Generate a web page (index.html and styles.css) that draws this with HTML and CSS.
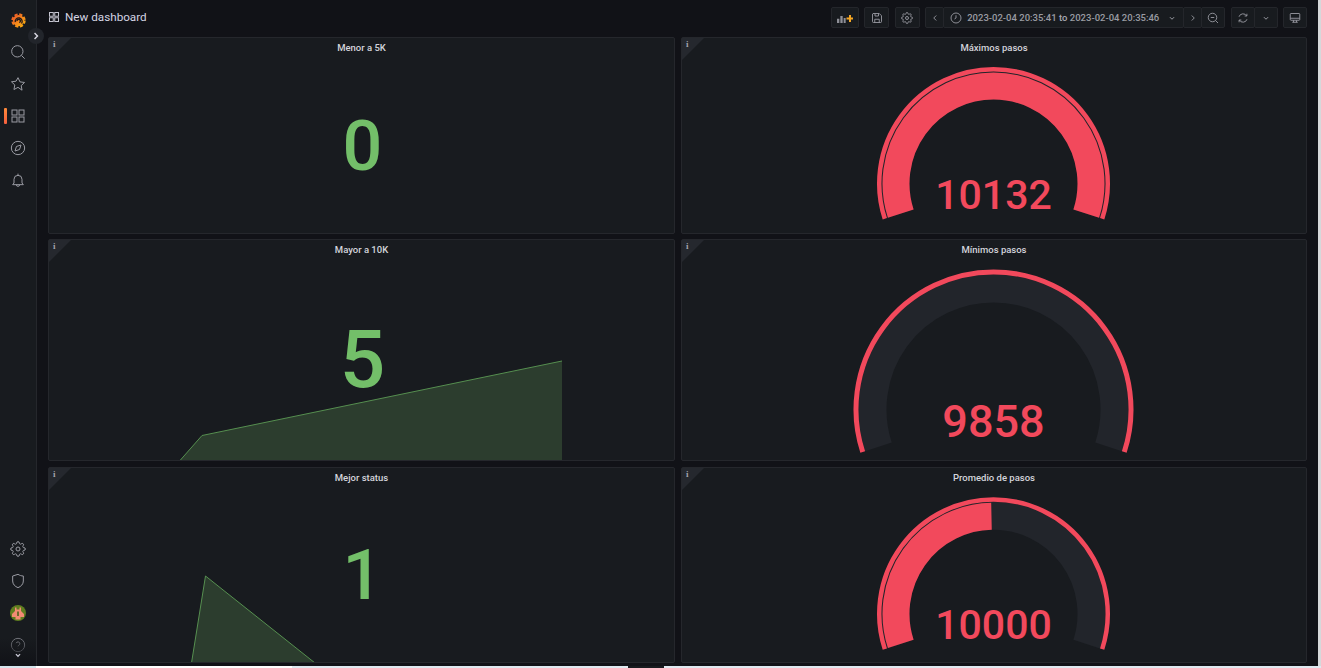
FILE: index.html
```html
<!DOCTYPE html>
<html lang="es">
<head>
  <meta charset="UTF-8" />
  <meta name="viewport" content="width=device-width, initial-scale=1.0" />
  <title>New dashboard</title>
  <link rel="stylesheet" href="styles.css">
</head>
<body>
  <svg class="defs" width="0" height="0">
    <defs>
      <linearGradient id="logo-grad" x1="0" y1="0" x2="1" y2="1">
        <stop offset="0" stop-color="#f0562a" />
        <stop offset="1" stop-color="#fbb30f" />
      </linearGradient>
      <symbol id="i-gear" viewBox="0 0 24 24">
        <circle cx="12" cy="12" r="3" />
        <path d="M19.4 15a1.65 1.65 0 0 0 .33 1.82l.06.06a2 2 0 0 1 0 2.83 2 2 0 0 1-2.83 0l-.06-.06a1.65 1.65 0 0 0-1.82-.33 1.65 1.65 0 0 0-1 1.51V21a2 2 0 0 1-2 2 2 2 0 0 1-2-2v-.09A1.65 1.65 0 0 0 9 19.4a1.65 1.65 0 0 0-1.82.33l-.06.06a2 2 0 0 1-2.83 0 2 2 0 0 1 0-2.83l.06-.06a1.65 1.65 0 0 0 .33-1.82 1.65 1.65 0 0 0-1.51-1H3a2 2 0 0 1-2-2 2 2 0 0 1 2-2h.09A1.65 1.65 0 0 0 4.6 9a1.65 1.65 0 0 0-.33-1.82l-.06-.06a2 2 0 0 1 0-2.83 2 2 0 0 1 2.83 0l.06.06a1.65 1.65 0 0 0 1.82.33H9a1.65 1.65 0 0 0 1-1.51V3a2 2 0 0 1 2-2 2 2 0 0 1 2 2v.09a1.65 1.65 0 0 0 1 1.51 1.65 1.65 0 0 0 1.82-.33l.06-.06a2 2 0 0 1 2.83 0 2 2 0 0 1 0 2.83l-.06.06a1.65 1.65 0 0 0-.33 1.82V9a1.65 1.65 0 0 0 1.51 1H21a2 2 0 0 1 2 2 2 2 0 0 1-2 2h-.09a1.65 1.65 0 0 0-1.51 1z" />
      </symbol>
      <symbol id="i-grid" viewBox="0 0 24 24">
        <rect x="3" y="3" width="7.5" height="7.5" />
        <rect x="13.5" y="3" width="7.5" height="7.5" />
        <rect x="3" y="13.5" width="7.5" height="7.5" />
        <rect x="13.5" y="13.5" width="7.5" height="7.5" />
      </symbol>
      <symbol id="i-chev-down" viewBox="0 0 24 24"><path d="M7 10l5 5 5-5" /></symbol>
      <symbol id="i-chev-left" viewBox="0 0 24 24"><path d="M14.5 7l-5 5 5 5" /></symbol>
      <symbol id="i-chev-right" viewBox="0 0 24 24"><path d="M9.5 7l5 5-5 5" /></symbol>
    </defs>
  </svg>

  <div class="app">
    <nav class="sidebar">
      <div class="side-group">
        <a class="side-item">
          <svg class="logo" viewBox="0 0 24 24">
            <circle class="logo-teeth" cx="12" cy="12" r="9.8" />
            <circle class="logo-body" cx="12" cy="12" r="9" />
            <path class="logo-spiral" d="M6.8 14.5a5.6 5.6 0 1 1 10 2.300" />
            <path class="logo-spiral" d="M9.500 13a2.800 2.800 0 1 1 3.800 2.400" />
          </svg>
        </a>
        <a class="side-item"><svg class="icon-lg" viewBox="0 0 24 24"><circle cx="11" cy="11" r="8.5" /><path d="M17.2 17.2L22 22" /></svg></a>
        <a class="side-item"><svg class="icon-lg" viewBox="0 0 24 24"><path d="M12 2.5l2.95 6.3 6.85.9-5 4.75 1.27 6.85L12 17l-6.07 3.3 1.27-6.85-5-4.75 6.85-.9z" /></svg></a>
        <a class="side-item is-active"><svg class="icon-lg" viewBox="0 0 24 24"><use href="#i-grid" /></svg></a>
        <a class="side-item"><svg class="icon-lg" viewBox="0 0 24 24"><circle cx="12" cy="12" r="10" /><path d="M16.5 7.5l-2.2 6.8-6.8 2.2 2.2-6.8z" /></svg></a>
        <a class="side-item"><svg class="icon-lg" viewBox="0 0 24 24"><path d="M18 16.5V11a6 6 0 0 0-12 0v5.5L4 19h16zM12 2.5V5M9.5 19a2.5 2.5 0 0 0 5 0" /></svg></a>
      </div>
      <div class="side-group">
        <a class="side-item"><svg class="icon-lg" viewBox="0 0 24 24"><use href="#i-gear" /></svg></a>
        <a class="side-item"><svg class="icon-lg" viewBox="0 0 24 24"><path d="M12 2L4 4.5V12c0 4.8 3.4 8.2 8 10 4.6-1.8 8-5.2 8-10V4.5C17 4.5 14.500 3.500 12 2z" /></svg></a>
        <a class="side-item">
          <svg class="avatar" viewBox="0 0 16 16">
            <circle class="avatar-bg" cx="8" cy="8" r="8" />
            <path class="avatar-fg" d="M5 2.500h1.500v2h3v-2H11v3.500l3 3v3H10.500v2.500h-5V12H2v-3l3-3z" />
            <path class="avatar-dk" d="M7 6.500h2v4.500H7z" />
          </svg>
        </a>
        <a class="side-item dim"><svg class="icon-lg" viewBox="0 0 24 24"><circle cx="12" cy="12" r="10" /><path d="M9.2 9.200a2.900 2.900 0 0 1 5.600 1c0 1.900-2.800 2.400-2.800 3.800M12 17.200v.3" /></svg></a>
      </div>
      <svg class="side-more" viewBox="0 0 24 24"><use href="#i-chev-down" /></svg>
    </nav>
    <button class="side-toggle"><svg viewBox="0 0 24 24"><use href="#i-chev-right" /></svg></button>

    <main class="content">
      <header class="toolbar">
        <div class="crumb">
          <svg class="crumb-icon" viewBox="0 0 24 24"><use href="#i-grid" /></svg>
          <span>New dashboard</span>
        </div>
        <div class="actions">
          <button class="tb-btn w-add">
            <svg class="icon-add" viewBox="0 0 24 24">
              <path class="bars" d="M0 13h3.500v6.500H0zM5 9h3.500v10.500H5zM10 12h3v7.500h-3z" />
              <path class="plus" d="M19.500 7.500V18M14.250 12.750h10.500" />
            </svg>
          </button>
          <button class="tb-btn w-icon"><svg class="icon" viewBox="0 0 24 24"><path d="M4 3h12.500L21 7.500V19a2 2 0 0 1-2 2H5a2 2 0 0 1-2-2V4zM8 3v5h7V3M7.500 21v-6.500h9V21" /></svg></button>
          <button class="tb-btn w-icon"><svg class="icon" viewBox="0 0 24 24"><use href="#i-gear" /></svg></button>

          <div class="tb-group">
            <button class="tb-btn w-arrow"><svg class="icon" viewBox="0 0 24 24"><use href="#i-chev-left" /></svg></button>
            <button class="tb-btn w-time">
              <svg class="icon" viewBox="0 0 24 24"><circle cx="12" cy="12" r="10" /><path d="M12 6.500V12l-3 2" /></svg>
              <span class="time-text">2023-02-04 20:35:41 <b>to</b> 2023-02-04 20:35:46</span>
              <svg class="icon-sm" viewBox="0 0 24 24"><use href="#i-chev-down" /></svg>
            </button>
            <button class="tb-btn w-arrow"><svg class="icon" viewBox="0 0 24 24"><use href="#i-chev-right" /></svg></button>
            <button class="tb-btn w-zoom"><svg class="icon" viewBox="0 0 24 24"><circle cx="11" cy="11" r="8.500" /><path d="M7.500 11h7M17.200 17.200L22 22" /></svg></button>
          </div>

          <div class="tb-group">
            <button class="tb-btn w-refresh"><svg class="icon" viewBox="0 0 24 24"><path d="M4 9.500A8.500 8.500 0 0 1 19.500 8M20 14.500A8.500 8.500 0 0 1 4.500 16M19.800 3.500V8h-4.500M4.200 20.500V16h4.500" /></svg></button>
            <button class="tb-btn w-caret"><svg class="icon-sm" viewBox="0 0 24 24"><use href="#i-chev-down" /></svg></button>
          </div>

          <button class="tb-btn w-tv"><svg class="icon" viewBox="0 0 24 24"><rect x="2.500" y="3" width="19" height="13.500" rx="1.500" /><path d="M2.500 12.500h19M9 16.500v4M15 16.500v4M6.500 20.500h11" /></svg></button>
        </div>
      </header>

      <section class="grid">
        <article class="panel">
          <div class="info-corner"><span>i</span></div>
          <h2 class="panel-title">Menor a 5K</h2>
          <div class="panel-body stat">0</div>
        </article>

        <article class="panel">
          <div class="info-corner"><span>i</span></div>
          <h2 class="panel-title">Máximos pasos</h2>
          <div class="panel-body">
            <svg class="gauge">
              <path class="g-track" stroke-width="28" d="M218.3 155.780A98 98 0 1 1 404.7 155.780" />
              <path class="g-band" stroke-width="4.500" d="M202.840 160.800A114.250 114.250 0 1 1 420.160 160.800" />
              <path class="g-bar" stroke-width="27" d="M218.770 155.630A97.500 97.500 0 1 1 404.230 155.630" />
              <text class="g-value g-40" x="311.500" y="151">10132</text>
            </svg>
          </div>
        </article>

        <article class="panel">
          <div class="info-corner"><span>i</span></div>
          <h2 class="panel-title">Mayor a 10K</h2>
          <svg class="spark">
            <polygon class="spark-fill" points="131,220.500 153,195.500 513,121 513,220.500" />
            <polyline class="spark-line" points="131,220.500 153,195.500 513,121" />
          </svg>
          <div class="panel-body stat stat-lg">5</div>
        </article>

        <article class="panel">
          <div class="info-corner"><span>i</span></div>
          <h2 class="panel-title">Mínimos pasos</h2>
          <div class="panel-body">
            <svg class="gauge">
              <path class="g-track" stroke-width="28" d="M196.420 186.890A121 121 0 1 1 426.580 186.890" />
              <path class="g-band" stroke-width="5" d="M180.730 191.990A137.500 137.500 0 1 1 442.270 191.990" />
              <text class="g-value g-44" x="311.500" y="177.200">9858</text>
            </svg>
          </div>
        </article>

        <article class="panel row-low">
          <div class="info-corner"><span>i</span></div>
          <h2 class="panel-title">Mejor status</h2>
          <svg class="spark">
            <polygon class="spark-fill" points="142.500,195 156.500,108 266,195" />
            <polyline class="spark-line" points="142.500,195 156.500,108 266,195" />
          </svg>
          <div class="panel-body stat">1</div>
        </article>

        <article class="panel row-low">
          <div class="info-corner"><span>i</span></div>
          <h2 class="panel-title">Promedio de pasos</h2>
          <div class="panel-body">
            <svg class="gauge">
              <path class="g-track" stroke-width="28" d="M218.300 156.080A98 98 0 1 1 404.700 156.080" />
              <path class="g-band" stroke-width="4.500" d="M202.840 161.100A114.250 114.250 0 1 1 420.160 161.100" />
              <path class="g-bar" stroke-width="27" d="M218.770 155.930A97.500 97.500 0 0 1 309.480 28.320" />
              <text class="g-value g-40" x="311.500" y="151">10000</text>
            </svg>
          </div>
        </article>
      </section>
    </main>
    <div class="edge"></div>
  </div>

  <footer class="strip">
    <div class="s-a"></div>
    <div class="s-b"></div>
    <div class="s-c"></div>
    <div class="s-d"></div>
    <div class="s-e"></div>
  </footer>
</body>
</html>
```

FILE: styles.css
```css
html, body {
  margin: 0;
  height: 668px;
  overflow: hidden;
  background: #111217;
  font-family: Roboto, "Liberation Sans", sans-serif;
  color: #ccccdc;
}
.defs { position: absolute; }

.app {
  position: relative;
  display: flex;
  height: 666px;
}

/* sidebar */
.sidebar {
  position: relative;
  box-sizing: border-box;
  width: 37px;
  flex: none;
  display: flex;
  flex-direction: column;
  justify-content: space-between;
  padding: 4px 0 5px;
  background: #181b1f;
  border-right: 1px solid #25272c;
}
.sidebar::after {
  content: "";
  position: absolute;
  left: 0;
  right: 0;
  bottom: 0;
  height: 28px;
  background: linear-gradient(rgba(17, 18, 23, 0), #111217);
}
.side-item {
  position: relative;
  display: flex;
  align-items: center;
  justify-content: center;
  height: 32px;
}
.side-item svg { display: block; }
.side-item.is-active::before {
  content: "";
  position: absolute;
  left: 4px;
  top: 8px;
  width: 3px;
  height: 16px;
  border-radius: 1px;
  background: linear-gradient(#ff8a3a, #f55f3e);
}
.side-item.dim { opacity: 0.7; }
.side-more {
  position: absolute;
  z-index: 1;
  left: 13px;
  top: 650px;
  width: 10px;
  height: 10px;
  fill: none;
  stroke: #c8c8d4;
  stroke-width: 3;
}
.side-toggle {
  position: absolute;
  z-index: 3;
  left: 28px;
  top: 28px;
  width: 16px;
  height: 16px;
  padding: 0;
  border: 0;
  border-radius: 50%;
  background: #22252b;
  display: flex;
  align-items: center;
  justify-content: center;
}
.side-toggle svg {
  width: 14px;
  height: 14px;
  fill: none;
  stroke: #d8d8e2;
  stroke-width: 2.5;
}
.logo { width: 15px; height: 15px; }
.logo-teeth {
  fill: none;
  stroke: url(#logo-grad);
  stroke-width: 3.400;
  stroke-dasharray: 5 2.700;
}
.logo-body { fill: url(#logo-grad); }
.logo-spiral {
  fill: none;
  stroke: #20191a;
  stroke-width: 2.100;
}
.avatar { width: 16px; height: 16px; }
.avatar-bg { fill: #5f7d1f; }
.avatar-fg { fill: #f28b74; }
.avatar-dk { fill: #6b6a2c; }

.icon-lg, .icon, .icon-sm, .crumb-icon {
  fill: none;
  stroke: #9a9ba3;
  stroke-width: 1.500;
}
.icon-lg { width: 16px; height: 16px; }
.icon { width: 12px; height: 12px; stroke-width: 1.800; flex: none; }
.icon-sm { width: 10px; height: 10px; stroke-width: 2.400; flex: none; }

/* content */
.content {
  flex: 1;
  min-width: 0;
  padding: 0 11px;
}
.edge {
  width: 3px;
  flex: none;
  background: #d6d8da;
}

.toolbar {
  display: flex;
  justify-content: space-between;
  align-items: flex-start;
  height: 37px;
  box-sizing: border-box;
  padding-top: 7px;
}
.crumb {
  display: flex;
  align-items: center;
  gap: 5px;
  height: 19px;
  font-size: 11.700px;
  color: #d4d4e2;
}
.crumb-icon {
  width: 12px;
  height: 12px;
  stroke: #c4c4d0;
  stroke-width: 2;
}
.actions {
  display: flex;
  align-items: flex-start;
  gap: 5.400px;
}
.tb-group {
  display: flex;
  gap: 0;
}
.tb-group .tb-btn + .tb-btn { margin-left: -1px; }
.tb-btn {
  box-sizing: border-box;
  display: flex;
  align-items: center;
  justify-content: center;
  height: 21px;
  padding: 0;
  border: 1px solid #24262b;
  border-radius: 2px;
  background: #181b1f;
  color: #9a9ba3;
  font-family: inherit;
}
.w-add { width: 28px; }
.w-icon { width: 25px; }
.w-tv { width: 24px; }
.w-arrow { width: 19px; }
.w-time { width: 241px; gap: 5px; justify-content: flex-start; padding-left: 6px; }
.w-zoom { width: 24px; }
.w-refresh { width: 24px; }
.w-caret { width: 24px; }
.time-text {
  font-size: 9.500px;
  font-weight: 500;
  white-space: nowrap;
  margin-right: 3px;
}
.time-text b { font-weight: 500; color: #a8a9b3; }
.icon-add { width: 16px; height: 16px; }
.icon-add .bars { fill: #8e8f97; }
.icon-add .plus { fill: none; stroke: #f5a623; stroke-width: 3; }

/* panels */
.grid {
  display: grid;
  grid-template-columns: 627px 626px;
  grid-template-rows: 197px 222px 197px;
  column-gap: 6px;
  row-gap: 5px;
}
.panel {
  position: relative;
  display: flex;
  flex-direction: column;
  min-width: 0;
  box-sizing: border-box;
  background: #181b1f;
  border: 1px solid #25272c;
  border-radius: 2px;
}
.row-low { margin-top: 1px; }
.info-corner {
  position: absolute;
  left: 0;
  top: 0;
  width: 22px;
  height: 22px;
  background: #25282e;
  clip-path: polygon(0 0, 100% 0, 0 100%);
}
.info-corner span {
  position: absolute;
  left: 4px;
  top: 0;
  font-family: "Liberation Serif", serif;
  font-weight: bold;
  font-size: 9px;
  line-height: 12px;
  color: #a2a3ab;
}
.panel-title {
  margin: 0;
  height: 20px;
  line-height: 20px;
  text-align: center;
  font-size: 9.500px;
  font-weight: 500;
  color: #d4d5dc;
}
.panel-body {
  position: relative;
  flex: 1;
  min-height: 0;
}
.stat {
  display: flex;
  align-items: center;
  justify-content: center;
  padding-left: 2px;
  font-size: 70px;
  font-weight: 500;
  line-height: 1;
  color: #73bf69;
}
.stat-lg { font-size: 80px; }
.spark {
  position: absolute;
  left: 0;
  top: 0;
  width: 100%;
  height: 100%;
}
.spark-fill { fill: #2c3d2e; }
.spark-line { fill: none; stroke: #568f50; stroke-width: 1; }

.gauge {
  display: block;
  width: 100%;
  height: 100%;
  overflow: visible;
}
.g-track, .g-band, .g-bar { fill: none; }
.g-track { stroke: #22252b; }
.g-band, .g-bar { stroke: #f2495c; }
.g-value {
  fill: #f2495c;
  font-weight: 500;
  text-anchor: middle;
}
.g-40 { font-size: 41px; }
.g-44 { font-size: 45px; }

/* what shows of the next window below the page */
.strip {
  display: flex;
  height: 2px;
}
.s-a { width: 36px; background: #d5e4ec; }
.s-b { width: 256px; background: #ffffff; }
.s-c { width: 336px; background: #dfe9f0; }
.s-d { width: 36px; background: #181b1f; }
.s-e { flex: 1; background: #dfe9f0; }
```
